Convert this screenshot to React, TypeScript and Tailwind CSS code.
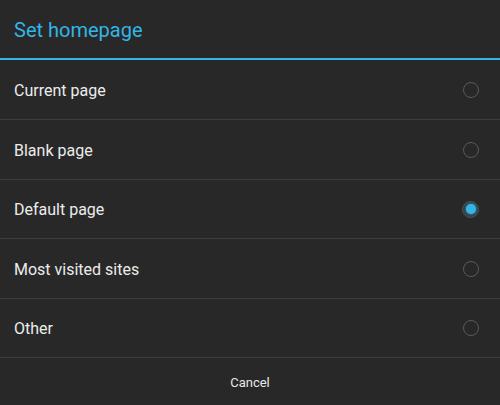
const options = [
  { label: "Current page", h: "h-[60px]" },
  { label: "Blank page", h: "h-[60px]" },
  { label: "Default page", h: "h-[59px]", selected: true },
  { label: "Most visited sites", h: "h-[60px]" },
  { label: "Other", h: "h-[59px]" },
];

function Radio({ selected }: { selected?: boolean }) {
  if (selected) {
    return (
      <div className="w-[17px] h-[17px] rounded-full bg-[#34414a] border border-[#46545d] flex items-center justify-center">
        <div className="w-[10px] h-[10px] rounded-full bg-[#33b5e5] shadow-[0_0_2px_#33b5e5]" />
      </div>
    );
  }
  return <div className="w-[16px] h-[16px] rounded-full border-[1.5px] border-[#5a5a5a]" />;
}

export default function App() {
  return (
    <div
      className="w-[500px] h-[405px] bg-[#282828] flex flex-col overflow-hidden"
      style={{ fontFamily: "Roboto, 'Liberation Sans', sans-serif" }}
    >
      {/* title */}
      <div className="h-[58px] px-[14px] pt-[2px] flex items-center text-[20px] text-[#33b5e5]">
        Set homepage
      </div>
      <div className="h-[2px] bg-[#33b5e5]" />

      {/* options */}
      <div className="flex flex-col">
        {options.map((o) => (
          <div
            key={o.label}
            className={`${o.h} pl-[14px] pr-[21px] flex items-center justify-between border-b border-[#3e3e3e]`}
          >
            <span className="pt-[2px] text-[16px] text-[#ececec]">{o.label}</span>
            <Radio selected={o.selected} />
          </div>
        ))}
      </div>

      {/* button */}
      <div className="flex-1 pt-[3px] flex items-center justify-center text-[13px] text-[#e8e8e8]">
        Cancel
      </div>
    </div>
  );
}
